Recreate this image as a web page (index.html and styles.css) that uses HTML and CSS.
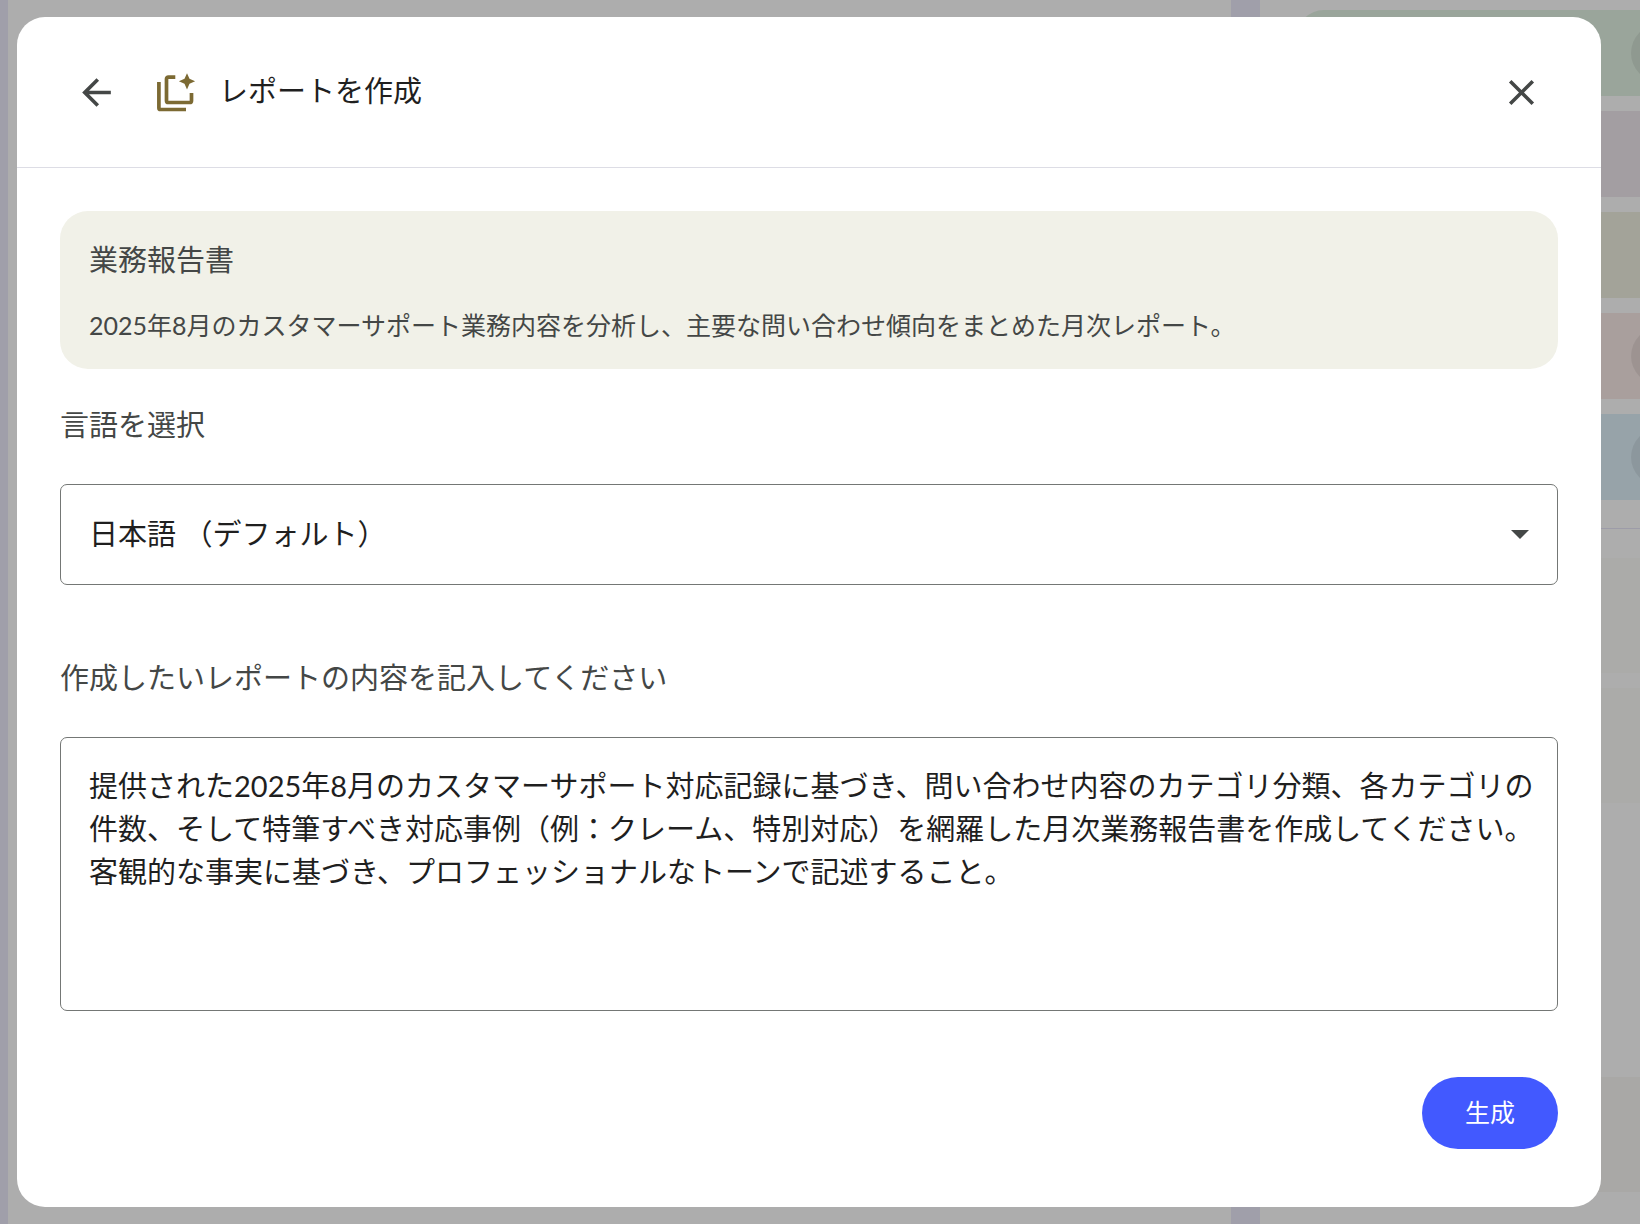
FILE: index.html
```
<!DOCTYPE html>
<html lang="ja">
<head>
  <meta charset="UTF-8">
  <meta name="viewport" content="width=device-width, initial-scale=1">
  <title>レポートを作成</title>
  <link rel="stylesheet" href="styles.css">
</head>
<body>
  <!-- Dimmed page behind the dialog -->
  <div class="backdrop" aria-hidden="true">
    <div class="chat-panel"></div>
    <div class="studio-panel">
      <div class="tiles">
        <div class="tile green"><span class="tile-edit"></span></div>
        <div class="tile purple"></div>
        <div class="tile olive"></div>
        <div class="tile red"><span class="tile-edit"></span></div>
        <div class="tile blue"><span class="tile-edit"></span></div>
      </div>
      <div class="notes">
        <div class="note"></div>
        <div class="note"></div>
        <div class="note last"></div>
      </div>
    </div>
  </div>

  <main class="dialog" role="dialog" aria-labelledby="dialog-title">
    <header class="dialog-header">
      <button type="button" class="icon-btn" aria-label="戻る">
        <svg class="icon" viewBox="0 0 24 24"><path d="M7.83 13l5.6 5.6L12 20l-8-8 8-8 1.43 1.4L7.83 11H20v2z"/></svg>
      </button>
      <svg class="report-icon" viewBox="0 -1 39 39" aria-hidden="true">
        <path class="line" d="M1.9 8V34a1.5 1.5 0 0 0 1.5 1.5H29"/>
        <path class="line" d="M18.3 3.1H11.3a1.8 1.8 0 0 0-1.8 1.8V26.7a1.8 1.8 0 0 0 1.8 1.8H32.7a1.8 1.8 0 0 0 1.8-1.8V19"/>
        <path class="star" d="M30-.8l2.5 5.6 5.6 2.5-5.6 2.5-2.5 5.6-2.5-5.6-5.6-2.5 5.6-2.5z"/>
      </svg>
      <h1 id="dialog-title">レポートを作成</h1>
      <button type="button" class="icon-btn close" aria-label="閉じる">
        <svg class="icon" viewBox="0 0 24 24"><path d="M6.4 19L5 17.6l5.6-5.6L5 6.4 6.4 5l5.6 5.6L17.6 5 19 6.4 13.4 12l5.6 5.6-1.4 1.4-5.6-5.6z"/></svg>
      </button>
    </header>

    <form class="dialog-body">
      <section class="summary">
        <h2>業務報告書</h2>
        <p>2025年8月のカスタマーサポート業務内容を分析し、主要な問い合わせ傾向をまとめた月次レポート。</p>
      </section>

      <div class="field">
        <label for="language">言語を選択</label>
        <div class="select-wrap">
          <select id="language">
            <option>日本語 （デフォルト）</option>
          </select>
          <svg class="arrow" viewBox="0 0 18 9" aria-hidden="true"><path d="M0 0h18L9 9z"/></svg>
        </div>
      </div>

      <div class="field">
        <label for="prompt">作成したいレポートの内容を記入してください</label>
        <textarea id="prompt" rows="5">提供された2025年8月のカスタマーサポート対応記録に基づき、問い合わせ内容のカテゴリ分類、各カテゴリの件数、そして特筆すべき対応事例（例：クレーム、特別対応）を網羅した月次業務報告書を作成してください。客観的な事実に基づき、プロフェッショナルなトーンで記述すること。</textarea>
      </div>

      <button type="button" class="generate-btn">生成</button>
    </form>
  </main>
</body>
</html>
```
FILE: styles.css
```
* {
  box-sizing: border-box;
}

body {
  margin: 0;
  padding: 17px 39px 17px 17px;
  min-height: 100vh;
  position: relative;
  overflow-x: hidden;
  background-color: #a09faa;
  color: #1f1f1f;
  font-family: Lato, "Noto Sans CJK JP", sans-serif;
  font-size: 29px;
}

h1, h2, p {
  margin: 0;
  font-weight: 400;
}

/* page behind */
.backdrop {
  position: absolute;
  inset: 0;
  display: flex;
  gap: 29px;
  padding-left: 8px;
  overflow: hidden;
}

.chat-panel {
  flex: 1;
  background-color: #adadad;
}

.studio-panel {
  width: 380px;
  background-color: #adadad;
}

.tiles {
  display: flex;
  flex-direction: column;
  gap: 15px;
  padding: 10px 0 28px 36px;
  border-bottom: 1px solid #9d9ca8;
}

.tile {
  display: flex;
  align-items: center;
  justify-content: flex-end;
  height: 86px;
  border-radius: 28px 0 0 28px;
}

.tile-edit {
  width: 58px;
  height: 58px;
  margin-right: -49px;
  border-radius: 50%;
  background-color: rgba(0, 0, 0, 0.07);
}

.green { background-color: #9aa59b; }
.purple { background-color: #a39ea2; }
.olive { background-color: #a3a399; }
.red { background-color: #a99f9d; }
.blue { background-color: #97a3a9; }

.notes {
  display: flex;
  flex-direction: column;
  gap: 15px;
  padding-top: 29px;
}

.note {
  height: 115px;
  background-color: #ababa9;
}

.note.last {
  margin-top: 259px;
  background-color: #a9a8a6;
}

/* dialog */
.dialog {
  position: relative;
  min-height: calc(100vh - 34px);
  border-radius: 28px;
  background-color: #fff;
}

.dialog-header {
  display: flex;
  align-items: center;
  padding: 46px 58px 45px;
  border-bottom: 1px solid #dddde5;
}

.dialog-header h1 {
  flex: 1;
  margin-left: 23px;
  padding-bottom: 3px;
  font-size: 29px;
  line-height: 40px;
}

.icon-btn {
  display: flex;
  padding: 8px 0;
  border: none;
  background: none;
  cursor: pointer;
}

.icon {
  width: 43px;
  height: 43px;
  fill: #444746;
}

.report-icon {
  width: 39px;
  height: 39px;
  margin-left: 39px;
}

.report-icon .line {
  fill: none;
  stroke: #7c6a33;
  stroke-width: 3.7;
}

.report-icon .star {
  fill: #7c6a33;
}

.dialog-body {
  display: flex;
  flex-direction: column;
  padding: 43px 43px 58px;
}

.summary {
  padding: 29px 29px 24px;
  border-radius: 28px;
  background-color: #f1f1e8;
  color: #444746;
}

.summary h2 {
  margin-bottom: 25px;
  font-size: 29px;
  line-height: 40px;
}

.summary p {
  font-size: 25px;
  line-height: 40px;
}

.field {
  display: flex;
  flex-direction: column;
  gap: 39px;
  margin-top: 36px;
}

.field + .field {
  margin-top: 73px;
}

.field label {
  color: #444746;
  line-height: 40px;
}

.select-wrap {
  position: relative;
}

select, textarea {
  display: block;
  width: 100%;
  border: 1px solid #747775;
  border-radius: 7px;
  background-color: #fff;
  color: #1f1f1f;
  font: inherit;
}

select {
  height: 101px;
  padding: 0 28px 3px;
  appearance: none;
}

.arrow {
  position: absolute;
  top: 46px;
  right: 29px;
  width: 18px;
  height: 9px;
  fill: #444746;
  pointer-events: none;
}

textarea {
  padding: 26px 16px 31px 28px;
  line-height: 43px;
  resize: none;
  overflow: auto;
}

.generate-btn {
  align-self: flex-end;
  margin-top: 66px;
  padding: 15px 43px 17px;
  border: none;
  border-radius: 36px;
  background-color: #4259ff;
  color: #fff;
  font: inherit;
  font-size: 25px;
  line-height: 40px;
  cursor: pointer;
}
```
